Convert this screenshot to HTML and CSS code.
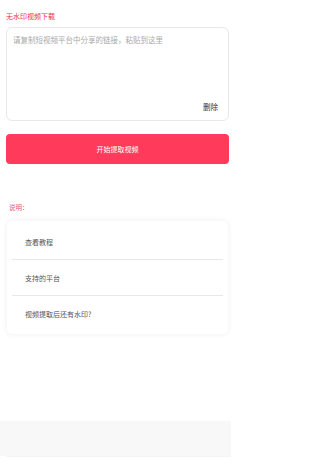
FILE: index.html
```html
<!DOCTYPE html>
<html lang="zh">
<head>
<meta charset="utf-8">
<link rel="stylesheet" href="styles.css">
</head>
<body>
<div class="app">
  <div class="page">
    <div class="title">无水印视频下载</div>
    <div class="inputbox">
      <div class="placeholder">请复制短视频平台中分享的链接，粘贴到这里</div>
      <div class="actions"><span class="del">删除</span></div>
    </div>
    <div class="btn">开始提取视频</div>
    <div class="note">说明：</div>
    <div class="card">
      <div class="row">查看教程</div>
      <div class="row">支持的平台</div>
      <div class="row last">视频提取后还有水印?</div>
    </div>
  </div>
  <div class="footer"></div>
  <div class="footline"></div>
</div>
</body>
</html>
```
FILE: styles.css
```css
html, body {
  margin: 0;
  padding: 0;
  background: #fff;
  font-family: "Noto Sans CJK SC", "Noto Sans", sans-serif;
}
.app {
  width: 231px;
}
.page {
  width: 231px;
  height: 421px;
  box-sizing: border-box;
  padding: 11px 2px 0 6px;
  display: flex;
  flex-direction: column;
}
.title {
  font-size: 7px;
  line-height: 10px;
  color: #e8334a;
  height: 10px;
}
.inputbox {
  margin-top: 6px;
  height: 94px;
  box-sizing: border-box;
  border: 1px solid #e8e8e8;
  border-radius: 6px;
  padding: 7px 10px 8px 6px;
  display: flex;
  flex-direction: column;
  justify-content: space-between;
}
.placeholder {
  font-size: 7.5px;
  line-height: 10px;
  color: #aaa;
}
.actions {
  display: flex;
  justify-content: flex-end;
}
.del {
  font-size: 7.5px;
  line-height: 10px;
  color: #333;
}
.btn {
  margin-top: 13px;
  height: 30px;
  border-radius: 4px;
  background: #ff3a5b;
  color: #fff;
  font-size: 7px;
  display: flex;
  align-items: center;
  justify-content: center;
}
.note {
  margin-top: 38px;
  margin-left: 3px;
  font-size: 6.5px;
  line-height: 10px;
  color: #e3557a;
}
.card {
  margin-top: 9px;
  margin-left: 1px;
  margin-right: 1px;
  background: #fff;
  border-radius: 5px;
  box-shadow: 0 0 6px rgba(0,0,0,0.07);
  padding: 3px 0 2px;
}
.row {
  height: 36px;
  box-sizing: border-box;
  margin: 0 5px;
  padding-left: 13px;
  border-bottom: 1px solid #e8e8e8;
  display: flex;
  align-items: center;
  font-size: 7px;
  color: #555;
}
.row.last {
  border-bottom: none;
}
.footer {
  width: 231px;
  height: 35px;
  background: #f8f8f8;
}
.footline {
  margin-left: 6px;
  width: 225px;
  height: 1px;
  background: #f4f4f4;
}
```
